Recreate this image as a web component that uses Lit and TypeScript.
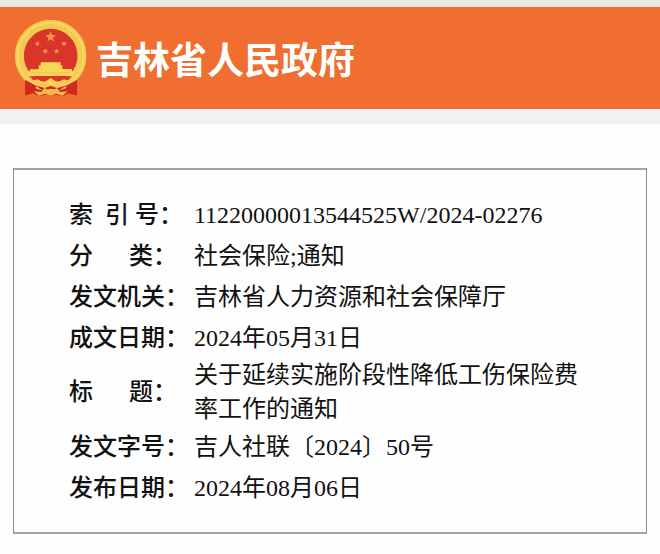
import { LitElement, html, css, svg } from "lit";
import { customElement } from "lit/decorators.js";

interface Field {
  label: string;
  value: string;
}

// Labels are padded with no-break spaces so that short ones spread out.
const FIELDS: Field[] = [
  { label: "索\u00a0\u00a0引\u00a0号：", value: "11220000013544525W/2024-02276" },
  { label: "分\u00a0\u00a0\u00a0\u00a0\u00a0\u00a0类：", value: "社会保险;通知" },
  { label: "发文机关：", value: "吉林省人力资源和社会保障厅" },
  { label: "成文日期：", value: "2024年05月31日" },
  { label: "标\u00a0\u00a0\u00a0\u00a0\u00a0\u00a0题：", value: "关于延续实施阶段性降低工伤保险费率工作的通知" },
  { label: "发文字号：", value: "吉人社联〔2024〕50号" },
  { label: "发布日期：", value: "2024年08月06日" },
];

function star(cx: number, cy: number, r: number) {
  const points = Array.from({ length: 10 }, (_, i) => {
    const radius = i % 2 ? r * 0.42 : r;
    const a = (Math.PI / 5) * i - Math.PI / 2;
    return `${(cx + radius * Math.cos(a)).toFixed(1)},${(cy + radius * Math.sin(a)).toFixed(1)}`;
  }).join(" ");
  return svg`<polygon points=${points} fill="#f09a4a" />`;
}

@customElement("site-emblem")
export class SiteEmblem extends LitElement {
  static styles = css`
    :host {
      display: block;
      flex: none;
    }
    .emblem {
      display: block;
      width: 74px;
      height: 77px;
    }
  `;

  render() {
    return html`
      <svg class="emblem" viewBox="42 60 222 231" role="img" aria-label="国徽">
        <path d="M76 226 L112 238 L152 246 L194 238 L232 226 L230 286 L206 280 L190 288 L152 282 L116 288 L98 280 L76 286 Z" fill="#d2281f" />
        <circle cx="152" cy="165" r="95" fill="#d9352b" />
        <circle cx="152" cy="167" r="94" fill="none" stroke="#f3c950" stroke-width="27" />
        <circle cx="152" cy="167" r="99" fill="none" stroke="#f8d968" stroke-width="6" />
        <path d="M122 187 H182 V196 H187 V207 H216 V214 H225 L219 228 H86 L80 214 H90 V208 H116 V196 H122 Z" fill="#f9d658" />
        <path d="M94 219 H212" stroke="#f0b446" stroke-width="2" />
        <path d="M88 229 H216 L204 241 Q182 234 152 233 Q122 234 100 241 Z" fill="#d9352b" />
        <path d="M128 247 Q140 244 152 234 Q164 244 178 247 Q164 256 152 252 Q140 256 128 247 Z" fill="#f9d658" />
        <path d="M76 240 L110 258 L94 281 L76 286 Z M231 240 L196 258 L210 281 L231 286 Z" fill="#d2281f" />
        <path d="M106 256 L134 264 L152 258 L172 264 L200 256 L176 272 L152 266 L128 272 Z" fill="#d2281f" />
        <path d="M102 274 L124 276 L133 264 L152 274 L171 264 L180 276 L203 274 L188 287 L169 281 L152 286 L135 281 L116 287 Z" fill="#f3bb48" />
        ${star(152, 111, 17)} ${star(112, 131, 9)} ${star(192, 131, 9)} ${star(136, 154, 9)} ${star(170, 154, 9)}
      </svg>
    `;
  }
}

@customElement("app-root")
export class AppRoot extends LitElement {
  static styles = css`
    :host {
      display: block;
      min-height: 100vh;
      background: #fefefe;
      color: #111;
      font-family: "Liberation Serif", "Noto Sans CJK SC", serif;
    }
    .strip {
      height: 7px;
      box-sizing: border-box;
      background: #e8ecdf;
      border-bottom: 3px solid #e3e5e8;
    }
    .banner {
      display: flex;
      align-items: center;
      gap: 8px;
      height: 102px;
      padding: 0 14px;
      box-sizing: border-box;
      background: #ef6e30;
    }
    .name {
      margin: 0;
      color: #fff;
      font: 700 37px/48px "Noto Sans CJK SC", sans-serif;
      white-space: nowrap;
    }
    .band {
      height: 15px;
      background: #f1f1f1;
    }
    .card {
      margin: 44px 13px 20px;
      padding: 24px 56px 24px 55px;
      border: 2px solid #a3a3a3;
      border-width: 2px 1px;
      border-left-color: #8c8c8c;
      border-right-color: #8c8c8c;
    }
    .fields {
      width: 100%;
      border-collapse: collapse;
      font-size: 24px;
      line-height: 34px;
    }
    .row {
      height: 41px;
    }
    .label,
    .value {
      padding: 0;
      text-align: left;
      vertical-align: middle;
    }
    .label {
      width: 125px;
      font-weight: 500;
      white-space: nowrap;
    }
    .value {
      font-weight: 400;
    }
  `;

  render() {
    return html`
      <div class="strip"></div>
      <header class="banner">
        <site-emblem></site-emblem>
        <h1 class="name">吉林省人民政府</h1>
      </header>
      <div class="band"></div>
      <main class="card">
        <table class="fields">
          <tbody>
            ${FIELDS.map(
              (f) => html`
                <tr class="row">
                  <th class="label" scope="row">${f.label}</th>
                  <td class="value">${f.value}</td>
                </tr>
              `,
            )}
          </tbody>
        </table>
      </main>
    `;
  }
}
